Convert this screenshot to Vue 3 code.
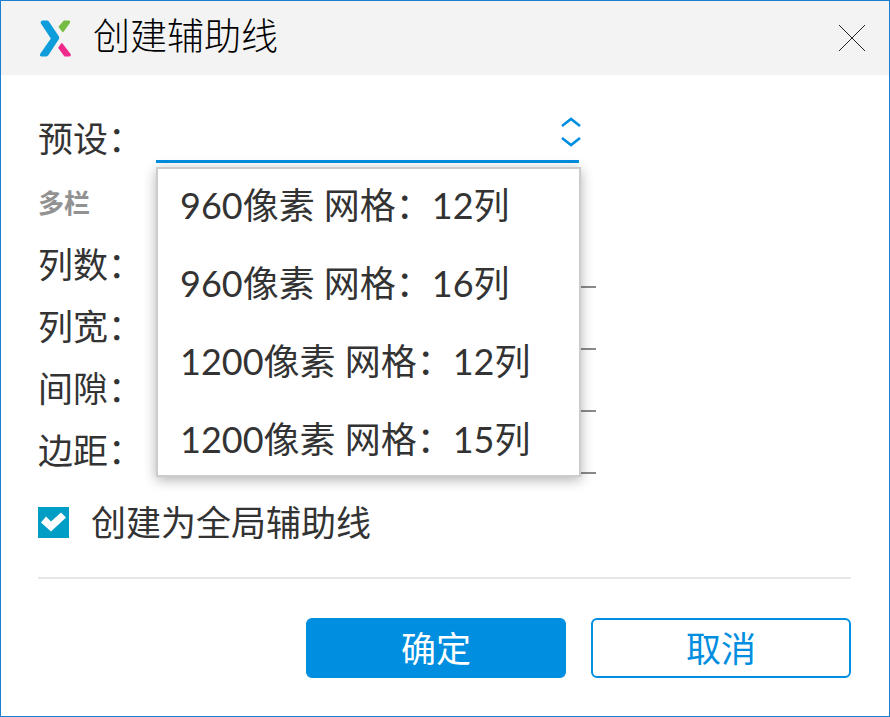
<template>
  <form class="dialog" @submit.prevent>
    <header class="title-bar">
      <svg class="logo" viewBox="32 33 92 108" aria-hidden="true">
        <path d="M42 37h13q2 0 3 2l29 43q2 3 0 6L56 135q-1 2-3 2H39q-4 0-2-4l30-43q2-3 0-6L39 42q-1-4 3-5z" fill="#0d9ddb" stroke="#0d9ddb" stroke-width="5" stroke-linejoin="round" />
        <path d="M105 37h13q3 0 1 4l-18 25-10-13z" fill="#76bc43" stroke="#76bc43" stroke-width="5" stroke-linejoin="round" />
        <path d="M98 103l23 30q2 4-2 4h-12l-17-23z" fill="#ee2a8b" stroke="#ee2a8b" stroke-width="5" stroke-linejoin="round" />
      </svg>
      <h1 class="title">创建辅助线</h1>
      <button type="button" class="close" aria-label="关闭">
        <svg viewBox="0 0 26 26" shape-rendering="crispEdges">
          <path d="M0 0L26 26M26 0L0 26" stroke="#222" stroke-width="1" />
        </svg>
      </button>
    </header>

    <div class="content">
      <div class="field preset-field">
        <label for="preset">预设：</label>
        <div class="preset">
          <select id="preset" v-model="preset">
            <option value=""></option>
            <option v-for="item in presets" :key="item" :value="item">{{ item }}</option>
          </select>
          <svg class="arrows" viewBox="0 0 20 32" aria-hidden="true">
            <path d="M1 10l9-7 9 7M1 22l9 7 9-7" />
          </svg>
          <ul v-if="open" class="menu" role="listbox">
            <li v-for="item in presets" :key="item" role="option" @click="choose(item)">{{ item }}</li>
          </ul>
        </div>
      </div>

      <h2 class="group">多栏</h2>

      <div v-for="field in fields" :key="field.id" class="field">
        <label :for="field.id">{{ field.label }}：</label>
        <input :id="field.id" v-model="field.value" type="text" class="number">
      </div>

      <div class="global">
        <input id="global" v-model="isGlobal" type="checkbox" class="check">
        <label for="global">创建为全局辅助线</label>
      </div>

      <footer class="actions">
        <button type="submit" class="btn primary">确定</button>
        <button type="button" class="btn">取消</button>
      </footer>
    </div>
  </form>
</template>

<script setup>
import { ref } from 'vue'

const presets = [
  '960像素 网格：12列',
  '960像素 网格：16列',
  '1200像素 网格：12列',
  '1200像素 网格：15列'
]
const fields = ref([
  { id: 'count', label: '列数', value: '' },
  { id: 'width', label: '列宽', value: '' },
  { id: 'gutter', label: '间隙', value: '' },
  { id: 'margin', label: '边距', value: '' }
])
const preset = ref('')
const open = ref(true)
const isGlobal = ref(true)

function choose(item) {
  preset.value = item
  open.value = false
}
</script>

<style>
body { margin: 0; background: #fff; }
</style>

<style scoped>
.dialog { box-sizing: border-box; min-height: 100vh; border: 1px solid #1a7fd0; background: #fff; color: #333; font-family: Lato, "Noto Sans CJK SC", sans-serif; font-size: 35px; line-height: 50px; }
.dialog button, .dialog input, .dialog select { font: inherit; margin: 0; }

.title-bar { display: flex; align-items: center; height: 74px; padding: 0 24px 0 38px; background: #f3f3f3; }
.logo { width: 32px; height: 37px; }
.title { flex: 1; align-self: flex-start; margin: 0 0 0 22px; color: #000; font-size: 37px; font-weight: 300; line-height: 70px; }
.close { display: flex; padding: 0; border: 0; background: none; }
.close svg { width: 26px; height: 26px; }

.content { padding: 38px 38px 37px 37px; }
.field { display: flex; align-items: center; height: 62px; }
.field label { flex: none; width: 118px; white-space: nowrap; }
.number { box-sizing: border-box; flex: 1; min-width: 0; max-width: 440px; height: 48px; padding: 0; border: 0; border-bottom: 2px solid #8a8a8a; background: none; outline: none; }

.preset-field { height: 50px; }
.preset { position: relative; flex: 1; max-width: 423px; }
.preset select { display: block; box-sizing: border-box; width: 100%; height: 50px; padding: 0 32px 0 24px; border: 0; border-bottom: 3px solid #008ee0; border-radius: 0; background: none; color: inherit; appearance: none; outline: none; }
.arrows { position: absolute; top: 3px; right: -2px; width: 20px; height: 32px; fill: none; stroke: #008ee0; stroke-width: 2.6; pointer-events: none; }
.menu { position: absolute; z-index: 1; top: 54px; left: 0; right: -2px; display: grid; gap: 6px; margin: 0; padding: 0; border: 2px solid #ccc; background: #fff; box-shadow: 0 3px 12px rgba(0, 0, 0, .3); list-style: none; font-size: 36px; }
.menu li { padding-left: 22px; line-height: 72px; white-space: nowrap; }

.group { margin: 10px 0 0; color: #929292; font-size: 26px; font-weight: 700; line-height: 60px; }

.global { display: flex; align-items: center; height: 62px; margin-top: 10px; }
.global label { margin-left: 22px; }
.check { flex: none; width: 31px; height: 31px; appearance: none; border: 1px solid #009dc4; background: #fff; }
.check:checked { background: #009dc4; }
.check:checked::before { content: ""; display: block; width: 29px; height: 29px; background: #fff; clip-path: polygon(2px 15px, 7px 9px, 12px 14px, 22px 5px, 27px 10px, 12px 24px); }

.actions { display: flex; justify-content: flex-end; gap: 25px; margin-top: 24px; padding-top: 39px; border-top: 2px solid #e6e6e6; }
.btn { box-sizing: border-box; width: 260px; height: 60px; padding: 0; border: 2px solid #008ee0; border-radius: 6px; background: #fff; color: #008ee0; }
.btn.primary { background: #008ee0; color: #fff; }
</style>
